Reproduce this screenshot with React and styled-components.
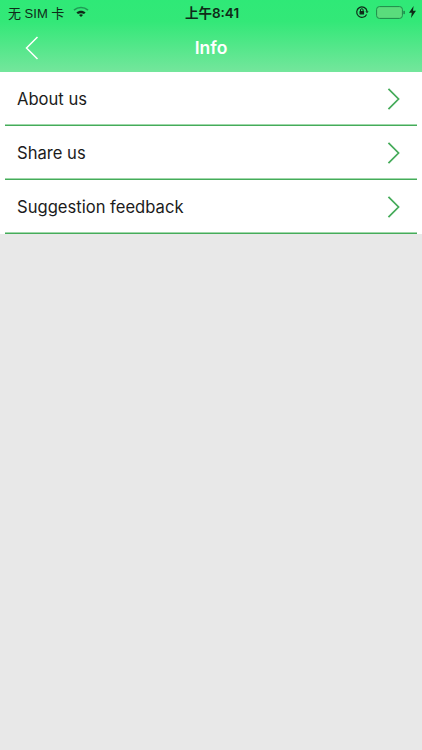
import React from "react";
import styled, { createGlobalStyle } from "styled-components";

const Global = createGlobalStyle`
  html, body { margin: 0; padding: 0; background: #e8e8e8; }
  body { font-family: "Liberation Sans", Arial, sans-serif; }
`;

const Page = styled.div`
  width: 422px;
  height: 750px;
  background: #e8e8e8;
  overflow: hidden;
  display: flex;
  flex-direction: column;
`;

const Header = styled.header`
  height: 72px;
  display: flex;
  flex-direction: column;
  background: linear-gradient(180deg, #2fe977 0%, #33e878 30%, #74e69c 100%);
`;

const StatusBar = styled.div`
  height: 24px;
  display: grid;
  grid-template-columns: 1fr auto 1fr;
  align-items: center;
  padding: 0 6px 0 8px;
  color: #0f2a18;
  font-size: 13px;
`;

const StatusLeft = styled.div`
  display: flex;
  align-items: center;
  gap: 9px;
  font-family: "Liberation Sans", "Noto Sans CJK SC", sans-serif;
  font-size: 13px;
`;

const StatusTime = styled.div`
  font-family: "Inter", "Noto Sans CJK SC", sans-serif;
  font-size: 13.5px;
  font-weight: 600;
`;

const StatusRight = styled.div`
  display: flex;
  align-items: center;
  justify-content: flex-end;
  gap: 4px;
`;

const LockSlot = styled.span`
  display: flex;
  margin-right: 3px;
`;

const NavBar = styled.div`
  flex: 1;
  position: relative;
  display: flex;
  align-items: center;
  justify-content: center;
`;

const BackButton = styled.button`
  position: absolute;
  left: 25px;
  top: 12px;
  width: 14px;
  height: 24px;
  padding: 0;
  border: 0;
  background: none;
  display: block;
`;

const Title = styled.h1`
  margin: 0 0 2px;
  color: #fff;
  font-family: "Inter", "Liberation Sans", sans-serif;
  font-size: 17.5px;
  font-weight: 600;
`;

const List = styled.ul`
  list-style: none;
  margin: 0;
  padding: 0;
  background: #fff;
`;

const Row = styled.li`
  height: 54px;
  box-sizing: border-box;
  margin: 0;
  padding: 0 22px 0 17px;
  position: relative;
  display: flex;
  align-items: center;
  justify-content: space-between;
  color: #1c1c1c;
  font-family: "Inter", "Liberation Sans", sans-serif;
  font-size: 16.6px;
  font-weight: 400;
  &::after {
    content: "";
    position: absolute;
    left: 5px;
    right: 5px;
    bottom: 0;
    height: 2px;
    background: linear-gradient(180deg, #9fd8aa 50%, #45ab5a 50%);
  }
`;

const Wifi = () => (
  <svg width="16" height="12" viewBox="0 0 16 12">
    <path d="M1 4.2C5 .6 11 .6 15 4.2" fill="none" stroke="#1f9a55" strokeWidth="1.6" />
    <path d="M3.4 6.4C6 4.2 10 4.2 12.6 6.4L11 8.1C9.2 6.8 6.8 6.8 5 8.1Z" fill="#0f2a18" />
    <path d="M6 8.9C7.2 8 8.8 8 10 8.9L8 11Z" fill="#0f2a18" />
  </svg>
);

const RotationLock = () => (
  <svg width="14" height="14" viewBox="0 0 14 14">
    <path d="M11.6 9.4A5.2 5.2 0 1 1 12 6" fill="none" stroke="#0f2a18" strokeWidth="1.2" />
    <path d="M10.4 6.2h3.2L12 8.2Z" fill="#0f2a18" />
    <rect x="4.5" y="6" width="4.6" height="3.6" rx=".5" fill="#0f2a18" />
    <path d="M5.5 6V5a1.3 1.3 0 0 1 2.6 0v1" fill="none" stroke="#0f2a18" />
  </svg>
);

const Battery = () => (
  <svg width="29" height="13" viewBox="0 0 29 13">
    <rect x=".6" y=".6" width="25.8" height="11.8" rx="2.8" fill="#5adc7c" stroke="#1f8a4a" strokeWidth="1" />
    <rect x="27.4" y="4.8" width="1.4" height="3.4" rx=".6" fill="#1f7a45" />
  </svg>
);

const Bolt = () => (
  <svg width="7" height="12" viewBox="0 0 7 12">
    <path d="M4.6 0 0 6.8h2.8L2 12l5-7.2H4Z" fill="#0f2a18" />
  </svg>
);

const Chevron = () => (
  <svg width="13" height="22" viewBox="0 0 14 24" style={{ display: "block" }}>
    <path d="M1.5 1 12.5 12 1.5 23" fill="none" stroke="#45ab5a" strokeWidth="1.9" />
  </svg>
);

const BackChevron = () => (
  <svg width="14" height="24" viewBox="0 0 14 24" style={{ display: "block" }}>
    <path d="M12.5 1 1.5 12 12.5 23" fill="none" stroke="#fff" strokeWidth="1.5" />
  </svg>
);

const rows = ["About us", "Share us", "Suggestion feedback"];

export default function App() {
  return (
    <Page>
      <Global />
      <Header>
        <StatusBar>
          <StatusLeft>
            <span>无 SIM 卡</span>
            <Wifi />
          </StatusLeft>
          <StatusTime>上午8:41</StatusTime>
          <StatusRight>
            <LockSlot><RotationLock /></LockSlot>
            <Battery />
            <Bolt />
          </StatusRight>
        </StatusBar>
        <NavBar>
          <BackButton aria-label="Back"><BackChevron /></BackButton>
          <Title>Info</Title>
        </NavBar>
      </Header>
      <List>
        {rows.map((r) => (
          <Row key={r}>
            <span>{r}</span>
            <Chevron />
          </Row>
        ))}
      </List>
    </Page>
  );
}
